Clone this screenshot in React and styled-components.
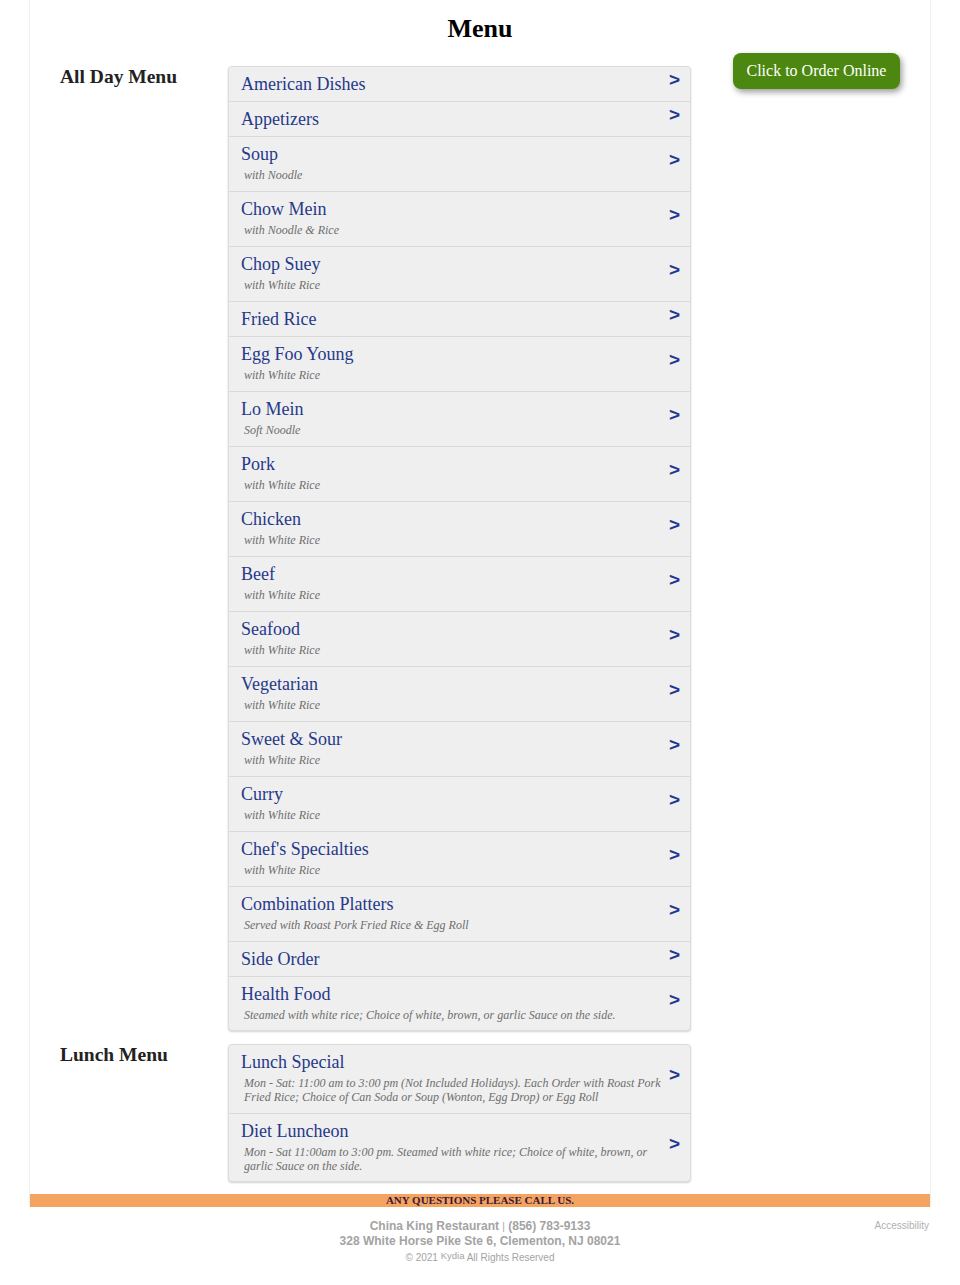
import React from "react";
import styled, { createGlobalStyle } from "styled-components";

const GlobalStyle = createGlobalStyle`
    body {
        margin: 0;
        background: #fff;
        font-family: "Liberation Serif", "Times New Roman", serif;
    }
`;

const allDay = [
    { name: "American Dishes" },
    { name: "Appetizers" },
    { name: "Soup", note: "with Noodle" },
    { name: "Chow Mein", note: "with Noodle & Rice" },
    { name: "Chop Suey", note: "with White Rice" },
    { name: "Fried Rice" },
    { name: "Egg Foo Young", note: "with White Rice" },
    { name: "Lo Mein", note: "Soft Noodle" },
    { name: "Pork", note: "with White Rice" },
    { name: "Chicken", note: "with White Rice" },
    { name: "Beef", note: "with White Rice" },
    { name: "Seafood", note: "with White Rice" },
    { name: "Vegetarian", note: "with White Rice" },
    { name: "Sweet & Sour", note: "with White Rice" },
    { name: "Curry", note: "with White Rice" },
    { name: "Chef's Specialties", note: "with White Rice" },
    { name: "Combination Platters", note: "Served with Roast Pork Fried Rice & Egg Roll" },
    { name: "Side Order" },
    { name: "Health Food", note: "Steamed with white rice; Choice of white, brown, or garlic Sauce on the side." },
];

const lunch = [
    {
        name: "Lunch Special",
        note: "Mon - Sat: 11:00 am to 3:00 pm (Not Included Holidays). Each Order with Roast Pork Fried Rice; Choice of Can Soda or Soup (Wonton, Egg Drop) or Egg Roll",
    },
    {
        name: "Diet Luncheon",
        note: "Mon - Sat 11:00am to 3:00 pm. Steamed with white rice; Choice of white, brown, or garlic Sauce on the side.",
    },
];

const MenuPanel = ({ items }) => (
    <Panel>
        {items.map((item) => (
            <Row key={item.name}>
                <RowText>
                    <ItemName>{item.name}</ItemName>
                    {item.note && <ItemNote>{item.note}</ItemNote>}
                </RowText>
                <Chevron>&gt;</Chevron>
            </Row>
        ))}
    </Panel>
);

export default function App() {
    return (
        <>
            <GlobalStyle />
            <Page>
                <Title>Menu</Title>
                <Section>
                    <SectionLabel>All Day Menu</SectionLabel>
                    <MenuPanel items={allDay} />
                    <Side>
                        <OrderButton>Click to Order Online</OrderButton>
                    </Side>
                </Section>
                <Section>
                    <SectionLabel>Lunch Menu</SectionLabel>
                    <MenuPanel items={lunch} />
                    <Side />
                </Section>
                <CallBar>ANY QUESTIONS PLEASE CALL US.</CallBar>
            </Page>
            <Footer>
                <span />
                <FooterInfo>
                    <Strong>
                        China King Restaurant <Pipe>|</Pipe> (856) 783-9133
                    </Strong>
                    <Strong>328 White Horse Pike Ste 6, Clementon, NJ 08021</Strong>
                    <Copy>
                        © 2021 <Kydia>Kydia</Kydia> All Rights Reserved
                    </Copy>
                </FooterInfo>
                <Accessibility>Accessibility</Accessibility>
            </Footer>
        </>
    );
}

const Page = styled.div`
    width: 900px;
    margin: 0 auto;
    padding-top: 14px;
    border-left: 1px solid #f0f0f0;
    border-right: 1px solid #f0f0f0;
`;

const Title = styled.h1`
    margin: 0 0 9px;
    font-size: 26px;
    line-height: 30px;
    text-align: center;
    color: #000;
`;

const Section = styled.div`
    display: grid;
    grid-template-columns: 168px 463px 1fr;
    padding-left: 30px;
`;

const SectionLabel = styled.h2`
    margin: 13px 0 0;
    font-size: 19.5px;
    line-height: 22px;
    font-weight: bold;
    color: #222;
`;

const Panel = styled.div`
    margin-top: 13px;
    background: #efefef;
    border: 1px solid #dcdcdc;
    border-radius: 4px;
    box-shadow: 0 1px 2px rgba(0, 0, 0, 0.18);
    overflow: hidden;
`;

const Row = styled.div`
    display: flex;
    align-items: center;
    padding: 6px 10px 6px 12px;
    border-bottom: 1px solid #dadada;

    &:last-child {
        border-bottom: none;
        padding-bottom: 5px;
    }
`;

const RowText = styled.div`
    flex: 1;
    min-width: 0;
`;

const ItemName = styled.div`
    font-size: 18px;
    line-height: 22px;
    color: #26398a;
`;

const ItemNote = styled.div`
    margin: 3px 0 3px 3px;
    font-size: 12px;
    line-height: 14px;
    font-style: italic;
    color: #6e6e6e;
`;

const Chevron = styled.span`
    margin-left: 8px;
    font-family: "Liberation Sans", Arial, sans-serif;
    font-weight: bold;
    font-size: 19px;
    line-height: 14px;
    color: #1f3790;
    transform: translateY(-4px);
`;

const Side = styled.div`
    padding-left: 42px;
`;

const OrderButton = styled.button`
    height: 36px;
    padding: 0 13.5px;
    border: none;
    border-radius: 8px;
    background: #4c870f;
    color: #fff;
    font-family: "Liberation Serif", "Times New Roman", serif;
    font-size: 16px;
    box-shadow: 2px 3px 6px rgba(0, 0, 0, 0.4);
    cursor: pointer;
`;

const CallBar = styled.div`
    margin-top: 12px;
    height: 13px;
    background: #f4a460;
    text-align: center;
    font-size: 11px;
    line-height: 13px;
    font-weight: bold;
    color: #3a1838;
`;

const Footer = styled.footer`
    width: 900px;
    margin: 0 auto;
    padding-top: 12px;
    display: grid;
    grid-template-columns: 1fr auto 1fr;
    font-family: "Liberation Sans", Arial, sans-serif;
    color: #a3a3a3;
`;

const FooterInfo = styled.div`
    display: flex;
    flex-direction: column;
    align-items: center;
`;

const Strong = styled.div`
    font-size: 12px;
    line-height: 14px;
    font-weight: bold;
`;

const Pipe = styled.span`
    font-weight: normal;
    font-size: 10px;
`;

const Copy = styled.div`
    margin-top: 3px;
    font-size: 10px;
    line-height: 14px;
`;

const Kydia = styled.span`
    position: relative;
    top: -2px;
    font-size: 9.5px;
`;

const Accessibility = styled.div`
    justify-self: end;
    margin-right: 1px;
    font-size: 10px;
    line-height: 14px;
    color: #b0b0b0;
`;
